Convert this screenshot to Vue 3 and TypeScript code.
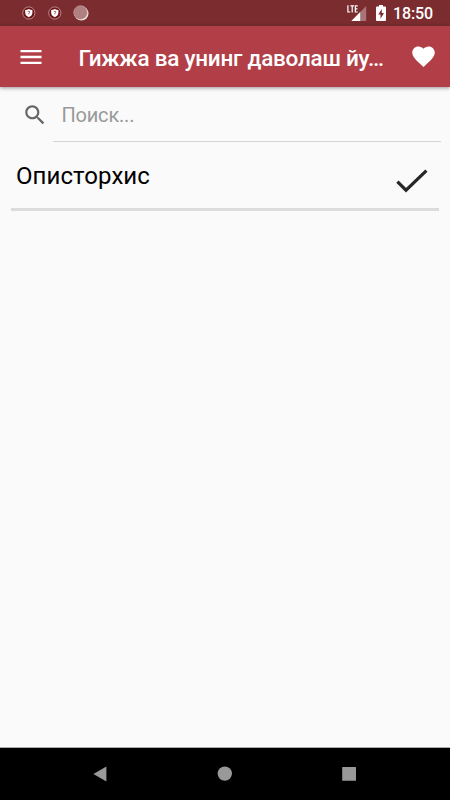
<script setup lang="ts">
import { ref } from 'vue'

const title = 'Гижжа ва унинг даволаш йу…'
const query = ref('')
const items: string[] = ['Описторхис']
const shields: number[] = [1, 2]
</script>

<template>
  <div class="screen">
    <div class="status">
      <div class="notifications">
        <svg v-for="n in shields" :key="n" class="note" viewBox="0 0 14 14">
          <circle cx="6.8" cy="7" r="6.1" fill="#6e1519" stroke="#c99fa1" stroke-width=".8" />
          <path d="M6.8 2.9 Q8.4 4 10.4 4 V7 Q10.2 9.7 6.8 11.2 Q3.4 9.7 3.2 7 V4 Q5.2 4 6.8 2.9Z" fill="#fff" />
          <path d="M5.7 5.4 H7.7 V6.7 L6.8 7.2 V8.4" fill="none" stroke="#95595b" stroke-width=".9" />
        </svg>
        <svg class="moon" viewBox="0 0 16 16">
          <circle cx="8.4" cy="8.4" r="7.1" fill="#f1e5e5" />
          <circle cx="7.5" cy="7.5" r="6.8" fill="#b08081" stroke="#cba8a9" stroke-width="1" stroke-dasharray="1.2 1" />
        </svg>
      </div>
      <div class="system">
        <svg class="signal" viewBox="0 0 20 18">
          <path d="M19.2 2 V17 H4.4Z" fill="#a87576" />
          <path d="M13.2 8 V17 H4.4Z" fill="#fff" />
          <path d="M0 0 H11 V9.2 H0Z" fill="#7a2c2f" />
          <path d="M.9 1.2 V8 H3.3 M3.4 1.8 H7 M5.2 1.8 V8.6 M10.7 1.8 H8.3 V8 H10.7 M8.3 4.9 H10.4" fill="none" stroke="#fff" stroke-width="1.2" />
        </svg>
        <svg class="battery" viewBox="0 0 10 16">
          <path d="M3 0 H7 V1.6 H9 Q10 1.6 10 2.6 V15 Q10 16 9 16 H1 Q0 16 0 15 V2.6 Q0 1.6 1 1.6 H3Z" fill="#fff" />
          <path d="M5.8 4 L2.3 9.5 H4.5 V13.7 L8 8 H5.8Z" fill="#7a2c2f" />
        </svg>
        <span class="clock">18:50</span>
      </div>
    </div>

    <header class="bar">
      <svg class="menu" viewBox="0 0 24 24"><path d="M3 18h18v-2H3v2zm0-5h18v-2H3v2zm0-7v2h18V6H3z" /></svg>
      <h1 class="title">{{ title }}</h1>
      <svg class="heart" viewBox="0 0 24 24"><path d="M12 21.35l-1.45-1.32C5.4 15.36 2 12.28 2 8.5 2 5.42 4.42 3 7.5 3c1.74 0 3.41.81 4.5 2.09C13.09 3.81 14.76 3 16.5 3 19.58 3 22 5.42 22 8.5c0 3.78-3.4 6.86-8.55 11.54L12 21.35z" /></svg>
    </header>

    <main class="content">
      <div class="search">
        <svg class="lens" viewBox="0 0 24 24"><path d="M15.5 14h-.79l-.28-.27C15.41 12.59 16 11.11 16 9.5 16 5.91 13.09 3 9.5 3S3 5.91 3 9.5 5.91 16 9.5 16c1.61 0 3.09-.59 4.23-1.57l.27.28v.79l5 4.99L20.49 19l-4.99-5zm-6 0C7.01 14 5 11.99 5 9.5S7.01 5 9.5 5 14 7.01 14 9.5 11.99 14 9.5 14z" /></svg>
        <input v-model="query" class="field" type="text" placeholder="Поиск..." />
      </div>
      <div v-for="item in items" :key="item" class="row">
        <span class="name">{{ item }}</span>
        <svg class="check" viewBox="0 0 32 24"><path d="M1.4 12.6 L10 21.2 L30.4 1.6" /></svg>
      </div>
    </main>

    <nav class="nav">
      <svg viewBox="0 0 16 16"><path d="M.4 8 L13.4 .4 V15.6Z" /></svg>
      <svg viewBox="0 0 16 16"><circle cx="7.8" cy="7.6" r="7.2" /></svg>
      <svg viewBox="0 0 16 16"><rect x="1.2" y="1" width="13.8" height="13.8" rx=".5" /></svg>
    </nav>
  </div>
</template>

<style>
body {
  margin: 0;
}
</style>

<style scoped>
.screen {
  width: 450px;
  height: 800px;
  display: flex;
  flex-direction: column;
  overflow: hidden;
  background: #fafafa;
  font-family: Roboto, "Noto Sans", sans-serif;
}
svg {
  display: block;
  flex: none;
}
.status {
  flex: none;
  height: 26px;
  background: #7a2c2f;
  display: flex;
  justify-content: space-between;
  box-sizing: border-box;
  padding: 0 17px 0 22px;
}
.notifications,
.system {
  display: flex;
  align-items: center;
}
.notifications {
  gap: 12px;
}
.note {
  width: 14px;
  height: 14px;
}
.moon {
  width: 16px;
  height: 16px;
  margin-left: -1px;
}
.signal {
  width: 20px;
  height: 18px;
}
.battery {
  width: 10px;
  height: 16px;
  margin: 0 7px 0 9px;
}
.clock {
  color: #fff;
  font-size: 16px;
  font-weight: 500;
  letter-spacing: -0.1px;
  line-height: 26px;
  padding-top: 2px;
}
.bar {
  flex: none;
  height: 61px;
  background: #b23f47;
  box-shadow: 0 1px 4px rgba(0, 0, 0, 0.4);
  display: flex;
  align-items: center;
  box-sizing: border-box;
  padding: 0 13px 0 16.5px;
}
.menu {
  width: 28px;
  height: 28px;
  fill: #fff;
}
.heart {
  width: 27px;
  height: 27px;
  fill: #fff;
}
.title {
  flex: 1;
  margin: 0 0 0 34px;
  color: #fff;
  font-size: 22.5px;
  font-weight: 500;
  letter-spacing: -0.25px;
  line-height: 30px;
  white-space: nowrap;
  padding-top: 2px;
}
.content {
  flex: 1;
  padding: 0 9px 0 11px;
}
.search {
  height: 55px;
  display: flex;
}
.lens {
  width: 26px;
  height: 26px;
  margin: 14.5px 4.5px 0 11px;
  fill: #666;
}
.field {
  flex: 1;
  min-width: 0;
  height: 55px;
  box-sizing: border-box;
  border: 0;
  border-bottom: 1px solid #d5d5d5;
  outline: 0;
  margin: 0;
  padding: 2px 8px 0 9px;
  background: transparent;
  color: #222;
  font: 400 20px Roboto, "Noto Sans", sans-serif;
  letter-spacing: -0.2px;
}
.field::placeholder {
  color: #999;
  opacity: 1;
}
.row {
  height: 69px;
  margin-right: 2px;
  box-sizing: border-box;
  border-bottom: 3px solid #dcdcdc;
  display: flex;
  justify-content: space-between;
  align-items: center;
  padding: 0 11px 0 5px;
}
.name {
  color: #000;
  font-size: 24px;
  letter-spacing: 0.08px;
  line-height: 30px;
  padding-top: 2px;
}
.check {
  width: 32px;
  height: 24px;
  margin-top: 11px;
}
.check path {
  fill: none;
  stroke: #272727;
  stroke-width: 3.2;
}
.nav {
  flex: none;
  height: 53px;
  border-top: 1px solid #aaa;
  box-sizing: border-box;
  background: #000;
  display: flex;
  align-items: center;
  justify-content: space-between;
  padding: 0 93px;
}
.nav svg {
  width: 16px;
  height: 16px;
  fill: #999;
}
</style>
